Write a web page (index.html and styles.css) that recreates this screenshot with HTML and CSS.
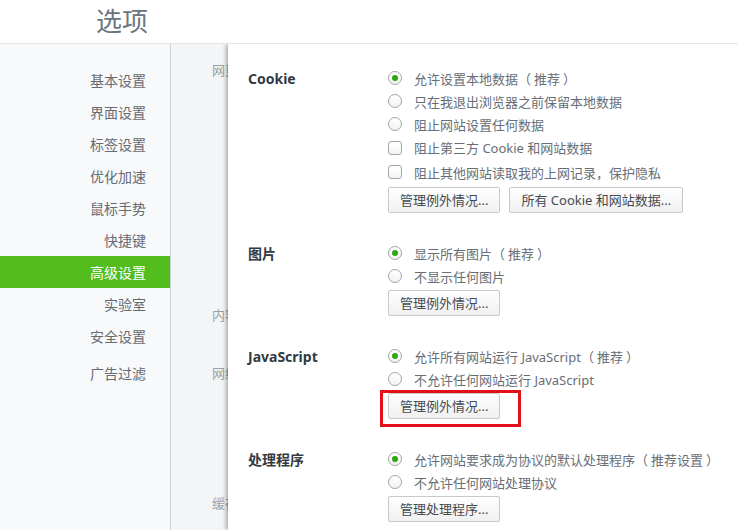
FILE: index.html
```html
<!DOCTYPE html>
<html>
<head>
<meta charset="UTF-8">
<title>选项</title>
<link rel="stylesheet" href="styles.css">
</head>
<body>
	<div class="header">
		<h1 class="title">选项</h1>
	</div>
	<div class="wrap">
		<ul class="menu">
			<li>基本设置</li>
			<li>界面设置</li>
			<li>标签设置</li>
			<li>优化加速</li>
			<li>鼠标手势</li>
			<li>快捷键</li>
			<li class="active">高级设置</li>
			<li>实验室</li>
			<li>安全设置</li>
			<li class="gap">广告过滤</li>
		</ul>
		<div class="main">
			<!-- 被弹出层盖住的底层设置 -->
			<div class="under">
				<p class="ghost g1">网页内容</p>
				<p class="ghost g2">内容设置</p>
				<p class="ghost g3">网络设置</p>
				<p class="ghost g4">缓存设置</p>
			</div>

			<div class="panel">
				<div class="section">
					<div class="label">Cookie</div>
					<div class="opts">
						<div class="row"><span class="radio on"></span>允许设置本地数据<span class="pl">（</span>推荐<span class="pr">）</span></div>
						<div class="row"><span class="radio"></span>只在我退出浏览器之前保留本地数据</div>
						<div class="row"><span class="radio"></span>阻止网站设置任何数据</div>
						<div class="row tall"><span class="check"></span>阻止第三方 Cookie 和网站数据</div>
						<div class="row tall"><span class="check"></span>阻止其他网站读取我的上网记录，保护隐私</div>
						<div class="btns">
							<span class="btn">管理例外情况...</span>
							<span class="btn">所有 Cookie 和网站数据...</span>
						</div>
					</div>
				</div>
				<div class="section">
					<div class="label">图片</div>
					<div class="opts">
						<div class="row"><span class="radio on"></span>显示所有图片<span class="pl">（</span>推荐<span class="pr">）</span></div>
						<div class="row"><span class="radio"></span>不显示任何图片</div>
						<div class="btns">
							<span class="btn">管理例外情况...</span>
						</div>
					</div>
				</div>
				<div class="section">
					<div class="label">JavaScript</div>
					<div class="opts">
						<div class="row"><span class="radio on"></span>允许所有网站运行 JavaScript<span class="pl">（</span>推荐<span class="pr">）</span></div>
						<div class="row"><span class="radio"></span>不允许任何网站运行 JavaScript</div>
						<div class="btns">
							<span class="btn mark">管理例外情况...</span>
						</div>
					</div>
				</div>
				<div class="section">
					<div class="label">处理程序</div>
					<div class="opts">
						<div class="row"><span class="radio on"></span>允许网站要求成为协议的默认处理程序<span class="pl">（</span>推荐设置<span class="pr">）</span></div>
						<div class="row"><span class="radio"></span>不允许任何网站处理协议</div>
						<div class="btns">
							<span class="btn">管理处理程序...</span>
						</div>
					</div>
				</div>
			</div>
		</div>
	</div>
</body>
</html>
```

FILE: styles.css
```css
html, body{
	margin: 0;
	padding: 0;
	height: 100%;
}
body{
	font-family: "Noto Sans", "Noto Sans CJK SC", sans-serif;
	display: flex;
	flex-direction: column;
	overflow: hidden;
	background: #fff;
}
.header{
	height: 43px;
	border-bottom: 1px solid #e4e6e9;
	flex: none;
}
.title{
	margin: 0;
	padding-left: 96px;
	font-size: 26px;
	font-weight: normal;
	line-height: 40px;
	color: #6b7581;
	font-family: "Noto Sans CJK SC", sans-serif;
}
.wrap{
	flex: 1;
	display: flex;
	min-height: 0;
}
.menu{
	list-style-type: none;
	margin: 0;
	padding: 20px 0 0 0;
	width: 170px;
	border-right: 1px solid #cfd1d4;
	background: #f8f9fb;
	flex: none;
}
.menu li{
	height: 32px;
	line-height: 32px;
	text-align: right;
	padding-right: 24px;
	font-size: 14px;
	color: #666b72;
	font-family: "Noto Sans CJK SC", sans-serif;
}
.menu li.active{
	background: #52bd1c;
	color: #fff;
}
.menu li.gap{
	margin-top: 5px;
}
.main{
	flex: 1;
	position: relative;
	background: #f3f5f7;
	overflow: hidden;
	padding-top: 16px;
}
.under{
	width: 57px;
	overflow: hidden;
}
.ghost{
	margin: 0;
	padding-left: 41px;
	height: 20px;
	line-height: 20px;
	font-size: 13px;
	color: #9aa0a8;
	white-space: nowrap;
	font-family: "Noto Sans CJK SC", sans-serif;
}
.g2{
	margin-top: 225px;
}
.g3{
	margin-top: 38px;
}
.g4{
	margin-top: 110px;
}
.panel{
	position: absolute;
	left: 57px;
	top: 0;
	right: 0;
	bottom: 0;
	background: #fff;
	box-shadow: -2px 0 4px rgba(0, 0, 0, 0.3);
	padding: 22.5px 0 0 20px;
}
.section{
	display: grid;
	grid-template-columns: 140px 1fr;
	margin-bottom: 29px;
}
.label{
	height: 23px;
	line-height: 23px;
	font-size: 14px;
	font-weight: bold;
	color: #333a42;
}
.row{
	height: 23px;
	display: flex;
	align-items: center;
	font-size: 13px;
	color: #686e76;
	white-space: nowrap;
}
.row.tall{
	height: 24.5px;
}
/* 全角括号里留空 */
.pl{
	margin: 0 3px 0 0;
}
.pr{
	margin: 0 0 0 3px;
}
.radio{
	width: 12px;
	height: 12px;
	border: 1px solid #a3a6aa;
	border-radius: 50%;
	background: linear-gradient(#fff, #f2f2f2);
	margin-right: 12px;
	position: relative;
	flex: none;
}
.radio.on::after{
	content: "";
	position: absolute;
	left: 3px;
	top: 3px;
	width: 6px;
	height: 6px;
	border-radius: 50%;
	background: #2ea60f;
}
.check{
	width: 12px;
	height: 12px;
	border: 1px solid #a3a6aa;
	border-radius: 3px;
	background: linear-gradient(#fff, #f4f4f4);
	margin-right: 12px;
	flex: none;
}
.btns{
	display: flex;
	gap: 9px;
	margin-top: 2px;
}
.btn{
	position: relative;
	height: 24px;
	line-height: 24px;
	padding: 0 11px;
	border: 1px solid #c6c8cb;
	border-radius: 2px;
	background: linear-gradient(#ffffff, #f0f0f0);
	font-size: 13px;
	color: #454a50;
	white-space: nowrap;
}
/* 红框标注 */
.mark::after{
	content: "";
	position: absolute;
	left: -9px;
	top: -4px;
	width: 135px;
	height: 31px;
	border: 3px solid #e3101a;
}
```
